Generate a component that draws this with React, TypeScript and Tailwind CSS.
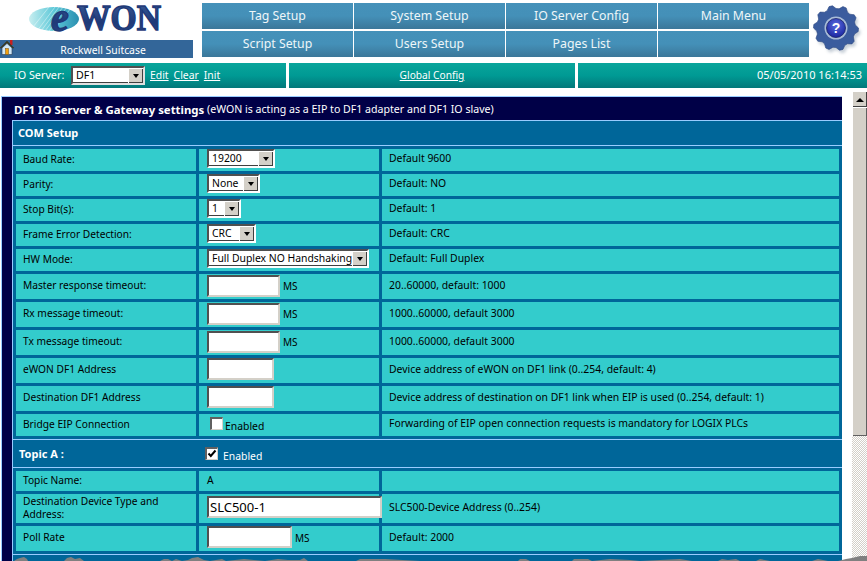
import React from "react";

const font = { fontFamily: '"Noto Sans", sans-serif' };

const navItems = ["Tag Setup", "System Setup", "IO Server Config", "Main Menu", "Script Setup", "Users Setup", "Pages List", ""];

function Logo() {
  return (
    <svg width="140" height="36" viewBox="0 0 140 36" className="block overflow-visible">
      <defs>
        <linearGradient id="sw" x1="0" x2="1" y1="0" y2="0">
          <stop offset="0" stopColor="#c8eef0" />
          <stop offset="0.5" stopColor="#5cc8d8" />
          <stop offset="1" stopColor="#2a8fb0" />
        </linearGradient>
        <linearGradient id="tx" x1="0" x2="0" y1="0" y2="1">
          <stop offset="0" stopColor="#3d5f9a" />
          <stop offset="0.6" stopColor="#1f3a78" />
          <stop offset="1" stopColor="#2b4a86" />
        </linearGradient>
      </defs>
      <ellipse cx="25" cy="15" rx="25" ry="12" fill="url(#sw)" />
      <g stroke="#ffffff" strokeWidth="0.7" opacity="0.6">
        <path d="M8 27 L26 3 M12 27 L30 3 M16 27 L34 3 M20 27 L38 3 M24 27 L42 4 M4 23 L20 3" />
      </g>
      <text x="22" y="27" fontFamily='"Liberation Serif", serif' fontWeight="700" fontStyle="italic" fontSize="40" fill="url(#tx)" stroke="#1f3a78" strokeWidth="1.4">e</text>
      <text x="48" y="26" textLength="84" lengthAdjust="spacingAndGlyphs" fontFamily='"Liberation Serif", serif' fontWeight="700" fontSize="35" fill="url(#tx)" stroke="#1f3a78" strokeWidth="1.4">WON</text>
    </svg>
  );
}

function HomeIcon() {
  return (
    <svg width="14" height="15" viewBox="0 0 14 15" className="block">
      <rect x="10" y="0" width="2.5" height="5" fill="#c81e1e" />
      <path d="M0 8 L7 1 L14 8 L12.5 8 L7 3 L1.5 8 Z" fill="#3a3a20" stroke="#3a3a20" strokeWidth="0.5" />
      <path d="M2 8 L7 3.4 L12 8 L12 14.5 L2 14.5 Z" fill="#cfe6f5" stroke="#2a3a50" strokeWidth="0.6" />
      <rect x="5.5" y="8.5" width="3" height="6" fill="#f0a010" stroke="#7a5010" strokeWidth="0.5" />
    </svg>
  );
}

function gearPoints() {
  const pts: string[] = [];
  const n = 10;
  for (let i = 0; i < n * 4; i++) {
    const a = (i / (n * 4)) * Math.PI * 2;
    const r = i % 4 === 0 || i % 4 === 1 ? 22.5 : 19.5;
    pts.push(`${26 + r * Math.cos(a)},${27 + r * Math.sin(a)}`);
  }
  return pts.join(" ");
}

function HelpIcon() {
  return (
    <svg width="56" height="56" viewBox="0 0 56 56" className="block">
      <defs>
        <radialGradient id="hb" cx="0.5" cy="0.35" r="0.7">
          <stop offset="0" stopColor="#5a6ce0" />
          <stop offset="1" stopColor="#16209a" />
        </radialGradient>
        <filter id="gs"><feGaussianBlur stdDeviation="1.5" /></filter>
      </defs>
      <polygon points={gearPoints()} fill="#9aa8b8" opacity="0.55" filter="url(#gs)" transform="translate(2 3)" />
      <polygon points={gearPoints()} fill="#3b5c9e" stroke="#2c4680" strokeWidth="0.6" />
      <circle cx="26" cy="27" r="11.5" fill="#a9bcd8" />
      <circle cx="26" cy="27" r="9.5" fill="url(#hb)" stroke="#1a2566" strokeWidth="0.8" />
      <text x="26" y="32" textAnchor="middle" fontFamily='"Liberation Sans", sans-serif' fontWeight="700" fontSize="14" fill="#ffffff">?</text>
    </svg>
  );
}

function Arrow() {
  return <span className="block w-0 h-0 border-x-[3.5px] border-x-transparent border-t-[4px] border-t-black" />;
}

function Select({ value, width }: { value: string; width: string }) {
  return (
    <div className={`${width} h-[19px] flex bg-white border-t-2 border-l-2 border-t-[#505050] border-l-[#505050] border-r-2 border-b-2 border-r-white border-b-white shadow-[inset_-1px_-1px_0_#404040] self-start shrink-0`}>
      <span className="flex-1 min-w-0 pl-[3px] text-black text-[10.4px] leading-[15px] whitespace-nowrap">{value}</span>
      <span className="w-[15px] h-[15px] bg-[#d4d0c8] border-t border-l border-white shadow-[inset_-1px_-1px_0_#404040] flex items-center justify-center shrink-0">
        <Arrow />
      </span>
    </div>
  );
}

function Input({ width, value }: { width: string; value?: string }) {
  return (
    <div className={`${width} h-[22px] bg-white border-t-2 border-l-2 border-t-[#505050] border-l-[#505050] border-r-2 border-b-2 border-r-[#d4d0c8] border-b-[#d4d0c8] self-start shrink-0 text-[13px] leading-[18px] text-black pl-[1px]`}>
      {value}
    </div>
  );
}

function Check({ checked }: { checked?: boolean }) {
  return (
    <span className="block w-[13px] h-[13px] bg-white border-t-2 border-l-2 border-t-[#606060] border-l-[#606060] border-r border-b border-r-[#d4d0c8] border-b-[#d4d0c8] shrink-0">
      {checked && (
        <svg width="10" height="10" viewBox="0 0 10 10" className="block">
          <path d="M1.5 4.5 L3.8 7 L8.5 1.5" fill="none" stroke="#000" strokeWidth="2" />
        </svg>
      )}
    </span>
  );
}

function Row({ h, label, control, desc }: { h: string; label: React.ReactNode; control: React.ReactNode; desc?: string }) {
  return (
    <div className={`grid grid-cols-[180px_180px_457px] gap-x-[3px] ${h}`}>
      <div className="bg-[#33cccc] pl-[7px] pb-[2px] flex items-center text-[10.2px] leading-[13px] text-black">{label}</div>
      <div className="bg-[#33cccc] pl-[8px] flex items-start text-[10.4px] text-black whitespace-nowrap">{control}</div>
      <div className="bg-[#33cccc] pl-[7px] pb-[2px] flex items-center text-[10.4px] text-black whitespace-nowrap">{desc}</div>
    </div>
  );
}

function Ms() {
  return <span className="ml-[3px] mt-[5px] leading-[14px] text-[10px]">MS</span>;
}

const jagLeft =
  "14,8 17,6 20,5 24,4 27,6 28,8 64,8 67,5 71,4 75,6 80,5 84,8 160,8 164,6 168,6 172,8 176,6 182,8 188,7 192,5 198,4 204,7 210,8 222,6 226,8 244,6 254,7 265,8 278,6 288,7 300,7 304,5 308,8 356,8 360,6 378,6 385,6 420,8 428,8 ";

function Jag() {
  return (
    <svg width="867" height="8" viewBox="0 0 867 8" className="absolute left-0 bottom-0 block">
      <polygon fill="#808080" points={`${jagLeft}432,8`} />
      <polygon fill="#808080" points="518,8 520,6 526,6 530,8 572,8 574,6 588,6 592,8 610,6 630,7 640,8 660,7 680,6 692,8 718,8 722,6 728,7 736,6 740,8 756,8 760,6 770,8 812,8 818,6 828,8 860,8" />
      <polygon fill="#808080" points="838,8 846,6 852,5 856,4 860,3 867,3 867,8" />
    </svg>
  );
}

export default function App() {
  return (
    <div style={font} className="w-[867px] h-[561px] bg-white overflow-hidden relative flex flex-col">
      <header className="h-[63px] flex shrink-0">
        <div className="w-[193px] shrink-0 flex flex-col">
          <div className="h-[40px] pl-[29px] pt-[4px]">
            <Logo />
          </div>
          <div className="h-[18px] bg-[#336699] flex items-center relative">
            <span className="absolute left-0 top-0"><HomeIcon /></span>
            <span className="w-full pl-[13px] pt-px text-center text-[10.4px] text-white leading-[18px]">Rockwell Suitcase</span>
          </div>
        </div>
        <nav className="ml-[9px] mt-[3px] w-[607px] h-[54px] grid grid-cols-[151px_151px_151px_151px] grid-rows-[26px_26px] gap-x-px gap-y-[2px] shrink-0">
          {navItems.map((t, i) => (
            <div key={i} className="bg-linear-to-b from-[#4591b9] via-[#4490b8] to-[#3b7799] flex items-center justify-center text-[12.3px] text-[#eef6f8]">
              {t}
            </div>
          ))}
        </nav>
        <div className="ml-[1px] pt-[1px]">
          <HelpIcon />
        </div>
      </header>

      <div className="h-[25px] flex gap-[3px] shrink-0 text-[10.4px] text-white">
        <div className="w-[286px] bg-linear-to-b from-[#0aa59b] via-[#009a94] to-[#02787a] flex items-center pl-[14px]">
          <span className="w-[50px] text-[10.8px] whitespace-nowrap">IO Server:</span>
          <div className="ml-[7px] w-[74px] h-[19px] flex bg-white border-t-2 border-l-2 border-t-[#505050] border-l-[#505050] border-r-2 border-b-2 border-r-[#e0e0e0] border-b-[#e0e0e0] shadow-[inset_-1px_-1px_0_#404040]">
            <span className="flex-1 pl-[3px] text-black text-[10.6px] leading-[15px]">DF1</span>
            <span className="w-[15px] h-[15px] bg-[#d4d0c8] border-t border-l border-white shadow-[inset_-1px_-1px_0_#404040] flex items-center justify-center"><Arrow /></span>
          </div>
          <a className="ml-[5px] underline">Edit</a>
          <a className="ml-[5px] underline">Clear</a>
          <a className="ml-[5px] underline">Init</a>
        </div>
        <div className="w-[286px] bg-linear-to-b from-[#0aa59b] via-[#009a94] to-[#02787a] flex items-center justify-center">
          <a className="underline text-[10.2px]">Global Config</a>
        </div>
        <div className="flex-1 bg-linear-to-b from-[#0aa59b] via-[#009a94] to-[#02787a] flex items-center justify-end pr-[5px] text-[11px]">
          05/05/2010 16:14:53
        </div>
      </div>

      <div className="mt-[3px] flex-1 flex min-h-0">
        <main className="ml-px mt-[5px] w-[841px] bg-[#000047] border-t border-l border-[#99ccff] overflow-hidden shrink-0">
          <div className="h-[23px] pl-[12px] pt-[2px] flex items-center text-[10.6px] text-white whitespace-nowrap">
            <b className="text-[11.4px]">DF1 IO Server &amp; Gateway settings</b>&nbsp;<span>(eWON is acting as a EIP to DF1 adapter and DF1 IO slave)</span>
          </div>
          <section className="ml-[10px] bg-[#006699] border-l border-[#99ccff]">
            <div className="border-t border-[#99ccff]" />
            <div className="h-[24px] pl-[5px] flex items-center text-[11px] font-bold text-white">COM Setup</div>
            <div className="border-t border-[#99ccff] pt-[3px] pl-[3px] pb-[3px] flex flex-col gap-[3px]">
              <Row h="h-[22px]" label="Baud Rate:" control={<Select value="19200" width="w-[68px]" />} desc="Default 9600" />
              <Row h="h-[22px]" label="Parity:" control={<Select value="None" width="w-[53px]" />} desc="Default: NO" />
              <Row h="h-[22px]" label="Stop Bit(s):" control={<Select value="1" width="w-[34px]" />} desc="Default: 1" />
              <Row h="h-[22px]" label="Frame Error Detection:" control={<Select value="CRC" width="w-[49px]" />} desc="Default: CRC" />
              <Row h="h-[22px]" label="HW Mode:" control={<Select value="Full Duplex NO Handshaking" width="w-[162px]" />} desc="Default: Full Duplex" />
              <Row h="h-[25px]" label="Master response timeout:" control={<><div className="pt-px"><Input width="w-[73px]" /></div><Ms /></>} desc="20..60000, default: 1000" />
              <Row h="h-[25px]" label="Rx message timeout:" control={<><div className="pt-px"><Input width="w-[73px]" /></div><Ms /></>} desc="1000..60000, default 3000" />
              <Row h="h-[25px]" label="Tx message timeout:" control={<><div className="pt-px"><Input width="w-[73px]" /></div><Ms /></>} desc="1000..60000, default 3000" />
              <Row h="h-[25px]" label="eWON DF1 Address" control={<Input width="w-[67px]" />} desc="Device address of eWON on DF1 link (0..254, default: 4)" />
              <Row h="h-[25px]" label="Destination DF1 Address" control={<Input width="w-[67px]" />} desc="Device address of destination on DF1 link when EIP is used (0..254, default: 1)" />
              <Row
                h="h-[22px]"
                label="Bridge EIP Connection"
                control={
                  <div className="flex items-start pl-[3px] pt-[3px]">
                    <Check />
                    <span className="ml-[2px] mt-[2px] leading-[14px]">Enabled</span>
                  </div>
                }
                desc="Forwarding of EIP open connection requests is mandatory for LOGIX PLCs"
              />
            </div>
            <div className="border-t border-[#99ccff] h-[28px] grid grid-cols-[192px_1fr] text-white">
              <div className="pl-[6px] pt-[7px] text-[11px] font-bold leading-[14px]">Topic A :</div>
              <div className="flex items-start pt-[7px] text-[10.4px]">
                <Check checked />
                <span className="ml-[5px] mt-[2px] leading-[14px]">Enabled</span>
              </div>
            </div>
            <div className="border-t border-[#99ccff] pt-[3px] pl-[3px] pb-[3px] flex flex-col gap-[3px]">
              <Row h="h-[20px]" label="Topic Name:" control={<span className="mt-[3px] leading-[13px]">A</span>} />
              <Row h="h-[29px]" label={<span>Destination Device Type and<br />Address:</span>} control={<div className="pt-[2px] relative z-10"><Input width="w-[175px]" value="SLC500-1" /></div>} desc="SLC500-Device Address (0..254)" />
              <Row h="h-[25px]" label="Poll Rate" control={<><Input width="w-[85px]" /><Ms /></>} desc="Default: 2000" />
            </div>
            <div className="border-t border-[#99ccff] h-[20px]" />
          </section>
        </main>

        <aside className="ml-[10px] w-[15px] flex flex-col shrink-0">
          <div className="h-[16px] bg-[#d4d0c8] border-t border-l border-white shadow-[inset_-1px_-1px_0_#404040] flex items-center justify-center">
            <span className="block w-0 h-0 border-x-[4px] border-x-transparent border-b-[4px] border-b-black" />
          </div>
          <div className="h-[329px] bg-[#d4d0c8] border-t border-l border-white shadow-[inset_-1px_-1px_0_#606060]" />
          <div className="flex-1 bg-[repeating-conic-gradient(#d4d0c8_0_25%,#ffffff_0_50%)] bg-size-[2px_2px]" />
        </aside>
      </div>
      <Jag />
    </div>
  );
}
